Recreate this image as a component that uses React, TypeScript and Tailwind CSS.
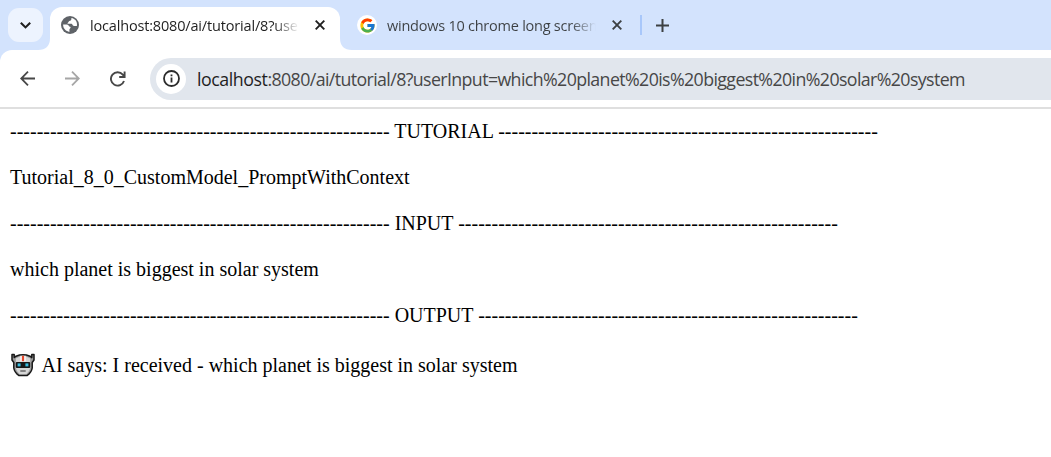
import React from 'react';
import { FcGoogle } from 'react-icons/fc';

const dashes = '-'.repeat(57);

function Globe() {
  return (
    <svg className="size-[18px] shrink-0" viewBox="0 0 18 18">
      <circle cx="9" cy="9" r="9" fill="#5f6368" />
      <path
        d="M10.4 2.1 C10.7 4.6 9.3 4.9 7.9 5.2 C7.6 6.7 6.5 6.3 6.5 7.8 H10.6 C11.8 8.1 11.3 9.9 12.9 9.9 H15.9 C16.7 5.8 14.2 2.7 10.4 2.1 Z M2.1 8.6 H6 C7.9 8.8 7.5 10.9 9.7 10.9 C9.6 12.3 8.5 12.5 8.4 13.4 V15.9 C5.2 15.5 2 12.9 2.1 8.6 Z"
        fill="#fff"
      />
    </svg>
  );
}

function Cross() {
  return (
    <svg className="size-[10px] shrink-0" viewBox="0 0 10 10" fill="none" stroke="currentColor" strokeWidth="1.9">
      <path d="M.7.7 9.3 9.3M9.3.7.7 9.3" />
    </svg>
  );
}

function Robot() {
  return (
    <svg className="h-[24px] w-[24px] shrink-0" viewBox="0 0 24 24">
      <path
        d="M1 1.6 H3.2 V4.6 L5 3.2 Q12 .4 19 3.2 L20.8 4.6 V1.6 H23 V7 L21.2 9.5 V15 Q20.6 19.5 16 22.6 H8 Q3.4 19.5 2.8 15 V9.5 L1 7 Z"
        fill="#9a9a9a"
        stroke="#171717"
        strokeWidth="1.5"
        strokeLinejoin="round"
      />
      <path d="M4.8 5.4 Q12 .9 19.2 5.4 V15 Q18.6 18.6 15.4 21.2 H8.6 Q5.4 18.6 4.8 15 Z" fill="#d6d6d6" />
      <path d="M9.2 2.8 H14.8 V8.4 H9.2 Z" fill="#f4f4f4" />
      <path d="M10.9 2.8 H13.1 V8.2 H10.9 Z" fill="#e8492e" />
      <rect x="4.8" y="8.9" width="14.4" height="6" rx="1" fill="#171717" />
      <rect x="6.6" y="10.4" width="3" height="3" fill="#38bde0" />
      <rect x="14.4" y="10.4" width="3" height="3" fill="#38bde0" />
      <path d="M9.3 18 H14.7" stroke="#4a4a4a" strokeWidth="1.2" />
    </svg>
  );
}

function TabBar() {
  return (
    <div className="flex h-[50px] bg-[#d3e3fd] pl-2">
      <div className="mt-2 flex h-[34px] w-[35px] items-center justify-center rounded-[11px] bg-[#edf3fe] text-[#1f1f1f]">
        <svg className="h-[7px] w-[11px]" viewBox="0 0 11 7" fill="none" stroke="currentColor" strokeWidth="2.1">
          <path d="M.8.8 5.5 5.4 10.2.8" />
        </svg>
      </div>
      <svg className="mt-[38px] -ml-[5px] h-[12px] w-[12px]" viewBox="0 0 12 12" fill="#fff">
        <path d="M12 0V12H0Q12 12 12 0Z" />
      </svg>
      <div className="mt-[7px] flex h-[43px] w-[290px] items-center rounded-t-[12px] bg-white pb-[7px] pl-[11px]">
        <Globe />
        <div className="mt-[2px] ml-[11px] w-[209px] overflow-hidden whitespace-nowrap bg-[linear-gradient(90deg,#1f1f1f_88%,transparent)] bg-clip-text font-['Open_Sans',sans-serif] text-[14.5px] leading-[20px] tracking-[-0.17px] text-transparent">
          localhost:8080/ai/tutorial/8?use
        </div>
        <div className="ml-[16px] flex text-[#1f1f1f]"><Cross /></div>
      </div>
      <svg className="mt-[38px] h-[12px] w-[12px]" viewBox="0 0 12 12" fill="#fff">
        <path d="M0 0V12H12Q0 12 0 0Z" />
      </svg>
      <div className="mt-[7px] flex h-[36px] items-center pl-[5px] text-[#3c4043]">
        <div className="flex size-5 items-center justify-center rounded-full bg-white"><FcGoogle size={17} /></div>
        <div className="mt-[2px] ml-[10px] w-[209px] overflow-hidden whitespace-nowrap bg-[linear-gradient(90deg,#3c4043_88%,transparent)] bg-clip-text font-['Open_Sans',sans-serif] text-[14.5px] leading-[20px] tracking-[-0.24px] text-transparent">
          windows 10 chrome long screen
        </div>
        <div className="ml-[16px] flex"><Cross /></div>
        <div className="ml-[18px] h-5 w-[2px] bg-[#a8c7fa]" />
        <svg className="ml-[14px] size-[13px]" viewBox="0 0 13 13" fill="none" stroke="currentColor" strokeWidth="2">
          <path d="M6.5 0V13M0 6.5H13" />
        </svg>
      </div>
    </div>
  );
}

function Toolbar() {
  return (
    <div className="h-[59px] bg-[#d3e3fd]">
      <div className="flex h-[59px] items-center rounded-tl-[12px] border-b-2 border-[#dfdfdf] bg-white pl-5">
        <svg className="h-[15px] w-[15px]" viewBox="0 0 15 15" fill="none" stroke="#474747" strokeWidth="1.8">
          <path d="M15 7.5H1.5M8 .7 1.2 7.5 8 14.3" />
        </svg>
        <svg className="ml-[30px] h-[15px] w-[15px]" viewBox="0 0 15 15" fill="none" stroke="#a6a6a6" strokeWidth="1.8">
          <path d="M0 7.5H13.5M7 .7 13.8 7.5 7 14.3" />
        </svg>
        <svg className="ml-[30px] h-[16px] w-[16px]" viewBox="0 0 16 16" fill="none" stroke="#474747" strokeWidth="1.9">
          <path d="M14 10A6.7 6.7 0 1 1 12.8 3.6L14.4 5.7M14.6.5V6H9.2" />
        </svg>
        <div className="ml-[24px] flex h-[42px] flex-1 items-center rounded-l-[21px] bg-[#e1e6ed] pl-[6px]">
          <div className="flex size-[30px] shrink-0 items-center justify-center rounded-full bg-white">
            <svg className="size-[17px]" viewBox="0 0 17 17" fill="none" stroke="#2b2b2b" strokeWidth="1.8">
              <circle cx="8.5" cy="8.5" r="7.5" />
              <path d="M8.5 7.6V12.5M8.5 4.4V6.2" />
            </svg>
          </div>
          <div className="mt-px ml-[11px] whitespace-nowrap font-['Open_Sans',sans-serif] text-[17.8px] leading-[24px] tracking-[-0.61px] text-[#474747]">
            <span className="tracking-[-0.45px] text-[#1f1f1f]">localhost</span>
            :8080/ai/tutorial/8?userInput=which%20planet%20is%20biggest%20in%20solar%20system
          </div>
        </div>
      </div>
    </div>
  );
}

export default function App() {
  return (
    <div className="h-[457px] w-full overflow-hidden bg-white">
      <TabBar />
      <Toolbar />
      <main className="flex flex-col gap-[23px] whitespace-nowrap pt-[11px] pl-[10px] font-['Liberation_Serif',serif] text-[20px] leading-[23px] text-black">
        <p>{dashes} TUTORIAL {dashes}</p>
        <p>Tutorial_8_0_CustomModel_PromptWithContext</p>
        <p>{dashes} INPUT {dashes}</p>
        <p>which planet is biggest in solar system</p>
        <p>{dashes} OUTPUT {dashes}</p>
        <div className="mt-[1px] flex h-[27px] items-center">
          <div className="mr-[6.5px] ml-[1px]"><Robot /></div>
          <p className="mt-px">AI says: I received - which planet is biggest in solar system</p>
        </div>
      </main>
    </div>
  );
}
